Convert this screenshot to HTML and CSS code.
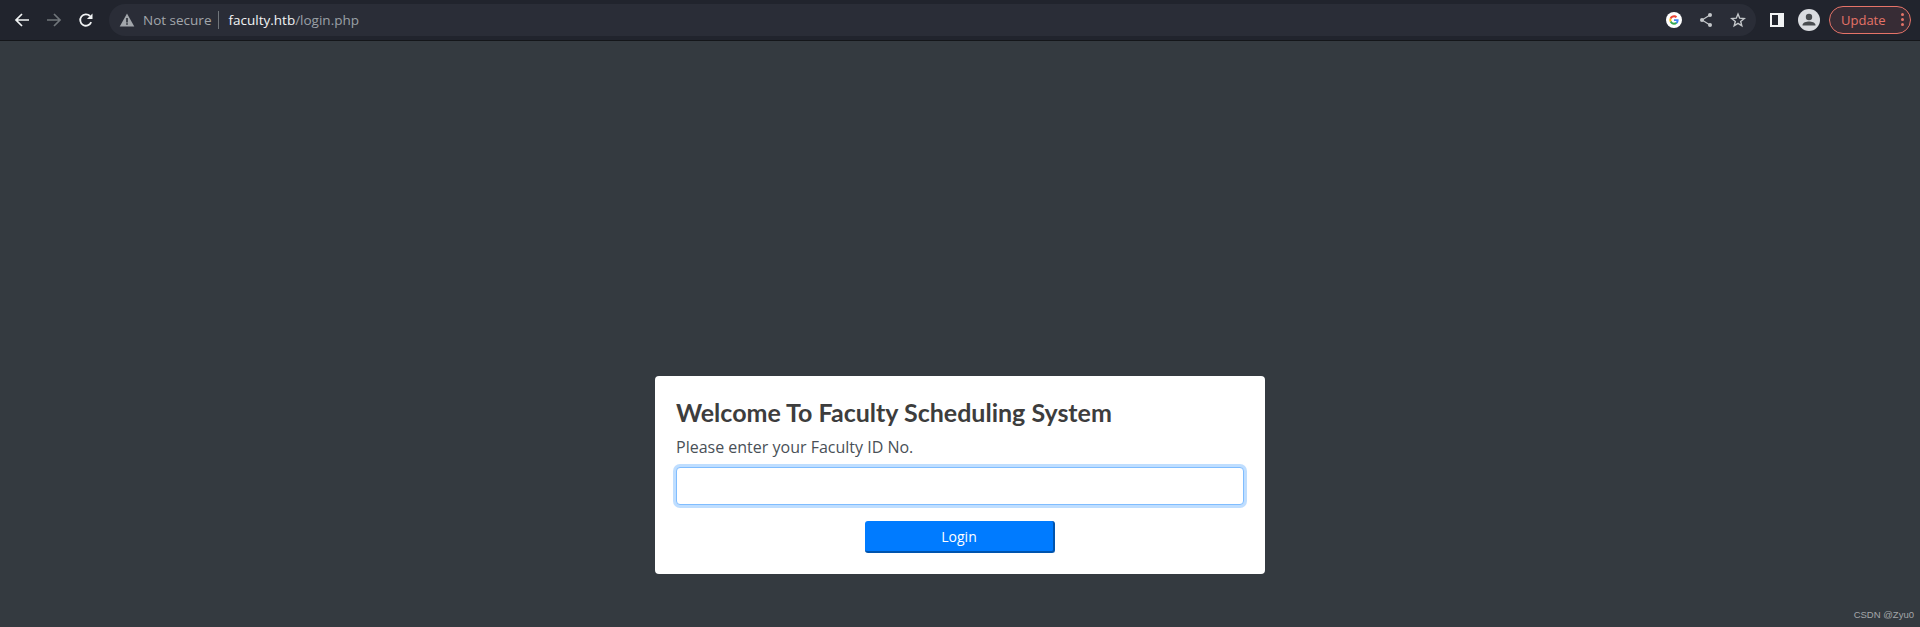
FILE: index.html
```html
<!DOCTYPE html>
<html lang="en">
<head>
    <meta charset="UTF-8">
    <title>faculty.htb/login.php</title>
    <link rel="stylesheet" href="styles.css">
</head>
<body>
    <header class="toolbar">
        <svg class="nav-icon" viewBox="0 0 16 16"><path d="M15 8H2.5M8 2 2 8l6 6" fill="none" stroke="#f1f3f4" stroke-width="1.7"/></svg>
        <svg class="nav-icon" viewBox="0 0 16 16"><path d="M1 8h12.5M8 2l6 6-6 6" fill="none" stroke="#70757a" stroke-width="1.7"/></svg>
        <svg class="nav-icon" viewBox="0 0 16 16"><path d="M13.2 10.2A5.7 5.7 0 1 1 12 4" fill="none" stroke="#f1f3f4" stroke-width="1.8"/><path d="M14.5 1.5v5.6H8.9z" fill="#f1f3f4"/></svg>
        <div class="omnibox">
            <svg class="warn-icon" viewBox="0 0 16 16"><path d="M8 1.5 15.3 14.5H.7z" fill="#a2a6ab"/><path d="M7.2 6h1.6v4.4H7.2zM7.2 11.2h1.6v1.6H7.2z" fill="#2a2d36"/></svg>
            <span class="not-secure">Not secure</span>
            <span class="url"><span class="host">faculty.htb</span>/login.php</span>
            <div class="omni-actions">
                <svg class="g-icon" viewBox="0 0 16 16">
                    <circle cx="8" cy="8" r="8" fill="#fff"/>
                    <path d="M12.6 8.2c0-.4 0-.7-.1-1H8v1.8h2.6c-.1.6-.4 1.1-1 1.5l1.5 1.2c.9-.8 1.5-2 1.5-3.5z" fill="#4285f4"/>
                    <path d="M8 12.7c1.3 0 2.3-.4 3.1-1.2l-1.5-1.2c-.4.3-1 .5-1.6.5-1.2 0-2.3-.8-2.6-2L3.800 10C4.600 11.600 6.200 12.700 8 12.700z" fill="#34a853"/>
                    <path d="M5.400 8.800a2.800 2.800 0 0 1 0-1.700L3.800 5.900a4.700 4.700 0 0 0 0 4.200z" fill="#fbbc05"/>
                    <path d="M8 5.200c.7 0 1.300.2 1.800.7l1.300-1.300C10.300 3.800 9.300 3.300 8 3.300c-1.800 0-3.400 1.100-4.200 2.600l1.600 1.200c.3-1.100 1.400-1.900 2.600-1.900z" fill="#ea4335"/>
                </svg>
                <svg class="act-icon" viewBox="0 0 16 16">
                    <path d="M12 3 4 8l8 5" fill="none" stroke="#c4c7ca" stroke-width="1.200"/>
                    <circle cx="12" cy="3" r="2" fill="#c4c7ca"/><circle cx="4" cy="8" r="2" fill="#c4c7ca"/><circle cx="12" cy="13" r="2" fill="#c4c7ca"/>
                </svg>
                <svg class="act-icon" viewBox="0 0 16 16"><path d="m8 2 1.700 4.200 4.500.3-3.500 2.900 1.100 4.400L8 11.400l-3.800 2.400 1.100-4.400-3.500-2.900 4.500-.3z" fill="none" stroke="#c4c7ca" stroke-width="1.400"/></svg>
            </div>
        </div>
        <svg class="panel-icon" viewBox="0 0 14 14"><path d="M0 0h14v14H0zM2 2v10h6V2z" fill="#f1f3f4" fill-rule="evenodd"/></svg>
        <svg class="avatar" viewBox="0 0 22 22">
            <circle cx="11" cy="11" r="11" fill="#dadce0"/>
            <circle cx="11" cy="8" r="3.200" fill="#494c50"/>
            <path d="M4.500 16c0-2.500 4-3.500 6.500-3.500s6.500 1 6.500 3.500v.5h-13z" fill="#494c50"/>
        </svg>
        <div class="update-btn">
            <span>Update</span>
            <span class="dots"><i></i><i></i><i></i></span>
        </div>
    </header>

    <main class="page">
        <div class="login-card">
            <h3 class="login-title">Welcome To Faculty Scheduling System</h3>
            <label class="login-label" for="facultyId">Please enter your Faculty ID No.</label>
            <input class="login-input" type="text" id="facultyId">
            <button class="login-btn">Login</button>
        </div>
        <span class="watermark">CSDN @Zyu0</span>
    </main>
</body>
</html>
```

FILE: styles.css
```css
* {
    box-sizing: border-box;
}
html, body {
    height: 100%;
}
body {
    margin: 0;
    display: flex;
    flex-direction: column;
    overflow: hidden;
    background: #343a40;
    font-family: "Open Sans", "Noto Sans", sans-serif;
}
.toolbar {
    height: 41px;
    flex-shrink: 0;
    display: flex;
    align-items: center;
    padding: 0 9px 1px 14px;
    background: #21242d;
    border-bottom: 1px solid #14161a;
}
.nav-icon {
    width: 16px;
    height: 16px;
    margin-right: 16px;
}
.omnibox {
    flex: 1;
    height: 32px;
    margin: 0 14px 0 -1px;
    padding: 0 10px;
    display: flex;
    align-items: center;
    border-radius: 16px;
    background: #2a2d37;
    font-size: 13.500px;
}
.warn-icon {
    width: 16px;
    height: 16px;
    margin-right: 8px;
    margin-left: 0;
}
.not-secure {
    color: #a2a6ab;
    padding-right: 7px;
    margin-right: 9px;
    border-right: 1px solid #70757a;
    line-height: 18px;
}
.url {
    color: #9aa0a6;
}
.host {
    color: #f1f3f4;
}
.omni-actions {
    margin-left: auto;
    display: flex;
    align-items: center;
    gap: 16px;
}
.g-icon {
    width: 16px;
    height: 16px;
}
.act-icon {
    width: 16px;
    height: 16px;
}
.panel-icon {
    width: 14px;
    height: 14px;
    margin-right: 14px;
}
.avatar {
    width: 22px;
    height: 22px;
    margin-right: 9px;
}
.update-btn {
    width: 82px;
    height: 28px;
    display: flex;
    align-items: center;
    justify-content: space-between;
    padding: 0 6px 0 11px;
    border: 1px solid #e57368;
    border-radius: 14px;
    background: #372c35;
    color: #e57368;
    font-size: 13px;
}
.dots {
    display: flex;
    flex-direction: column;
    gap: 2px;
}
.dots i {
    display: block;
    width: 3px;
    height: 3px;
    border-radius: 50%;
    background: #e57368;
}
.page {
    flex: 1;
    position: relative;
    display: flex;
    justify-content: center;
    align-items: flex-end;
    padding-bottom: 53px;
}
.login-card {
    width: 610px;
    height: 198px;
    padding: 21px;
    display: flex;
    flex-direction: column;
    background: #fff;
    border-radius: 4px;
    color: #495057;
}
.login-title {
    margin: 0 0 8px;
    font-family: Lato, "Noto Sans", sans-serif;
    font-size: 25px;
    line-height: 30px;
    font-weight: 700;
    color: #3d3d3d;
}
.login-label {
    font-size: 16px;
    line-height: 24px;
    color: #495057;
    margin-bottom: 8px;
}
.login-input {
    display: block;
    width: 100%;
    height: 38px;
    flex-shrink: 0;
    border: 1px solid #80bdff;
    border-radius: 4px;
    outline: none;
    box-shadow: 0 0 0 3px rgba(0, 123, 255, 0.25);
}
.login-btn {
    align-self: center;
    width: 190px;
    height: 33px;
    margin-top: 16px;
    border: none;
    border-right: 2px solid #0054ae;
    border-bottom: 2px solid #0054ae;
    border-radius: 3px;
    background: #007bff;
    color: #fff;
    font-family: inherit;
    font-size: 14px;
}
.watermark {
    position: absolute;
    right: 6px;
    bottom: 7px;
    font-family: "Liberation Sans", sans-serif;
    font-size: 9.500px;
    color: #a4a7aa;
}
```
